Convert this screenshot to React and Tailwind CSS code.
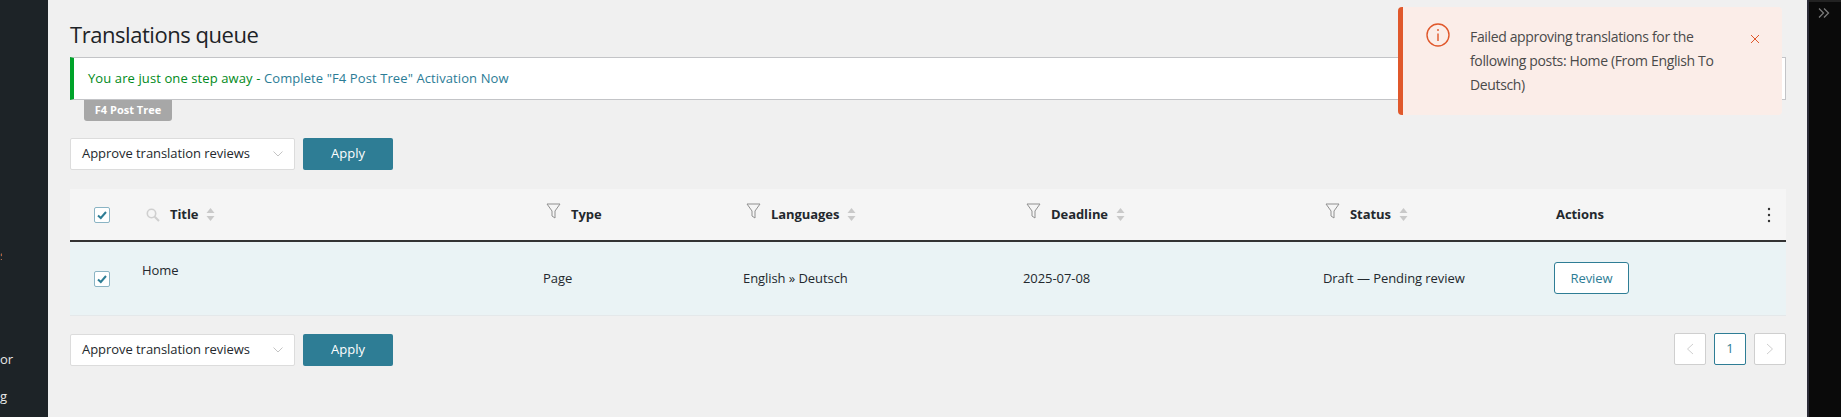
import React from 'react';

const Check = ({ className = '' }) => (
  <span className={`flex h-[16px] w-[16px] items-center justify-center rounded-[2px] border border-[#8ab4c4] bg-white ${className}`}>
    <svg width="12" height="12" viewBox="0 0 12 12" fill="none">
      <path d="M2 6.5 L4.8 9 L10 3" stroke="#2e7d95" strokeWidth="2" />
    </svg>
  </span>
);

const Sort = () => (
  <svg width="9" height="15" viewBox="0 0 9 15" className="ml-[8px] shrink-0">
    <path d="M4.5 1 L8.5 6 L0.5 6 Z" fill="#c9c9c9" />
    <path d="M4.5 14 L8.5 9 L0.5 9 Z" fill="#c9c9c9" />
  </svg>
);

const Funnel = () => (
  <svg width="15" height="17" viewBox="0 0 15 17" fill="none" className="mr-[10px] mt-[-6px] shrink-0">
    <path d="M1 1 H14 L9 8 V15 L6 13 V8 Z" stroke="#8f8f8f" strokeWidth="1" />
  </svg>
);

const Search = () => (
  <svg width="14" height="14" viewBox="0 0 14 14" fill="none" className="mr-[10px] shrink-0">
    <circle cx="5.5" cy="5.5" r="4.2" stroke="#cfcfcf" strokeWidth="1.6" />
    <path d="M8.7 8.7 L13 13" stroke="#cfcfcf" strokeWidth="2" />
  </svg>
);

const Chevron = () => (
  <svg width="10" height="6" viewBox="0 0 10 6" fill="none" className="shrink-0">
    <path d="M0.5 0.5 L5 5 L9.5 0.5" stroke="#c4c4c4" />
  </svg>
);

const BulkBar = () => (
  <div className="flex items-center gap-[8px]">
    <div className="flex h-[32px] w-[225px] items-center justify-between rounded-[2px] border border-[#dcdcdc] bg-white pl-[11px] pr-[11px] text-[13px] tracking-[-0.05px] text-[#23282d]">
      <span>Approve translation reviews</span>
      <Chevron />
    </div>
    <button className="h-[32px] w-[90px] rounded-[2px] bg-[#2e7d95] text-[13px] text-white">Apply</button>
  </div>
);

const PageBtn = ({ children, active }) => (
  <span className={active
    ? 'flex h-[32px] w-[32px] items-center justify-center rounded-[2px] border border-[#2e7d95] bg-white text-[13px] text-[#2e7d95]'
    : 'flex h-[32px] w-[32px] items-center justify-center rounded-[2px] border border-[#cfcfcf] bg-white'}>
    {children}
  </span>
);

const SideLabel = ({ text, className }) => (
  <div className={`overflow-hidden whitespace-nowrap text-[13px] ${className}`}>{text}</div>
);

export default function App() {
  return (
    <div className="relative flex h-[417px] w-[1841px] overflow-hidden bg-[#f0f0f0] font-['Open_Sans',sans-serif] text-[#23282d]">
      <aside className="w-[48px] shrink-0 bg-[#1d2327] text-[#e8e8e8]">
        <SideLabel text="s" className="mt-[246px] w-[2px] text-[#d9704a]" />
        <SideLabel text="or" className="mt-[84px] w-[14px]" />
        <SideLabel text="g" className="mt-[18px] w-[10px]" />
      </aside>

      <main className="flex-1 pl-[22px] pr-[21px]">
        <h1 className="mt-[18px] h-[33px] text-[22px] leading-[33px] tracking-[-0.45px] text-[#1d2327]">Translations queue</h1>
        <div className="mt-[6px] flex h-[43px] items-center border border-l-[4px] border-[#c3c4c7] border-l-[#00a32a] bg-white pl-[14px] text-[13px] font-medium tracking-[0.1px]">
          <span className="text-[#008a20]">You are just one step away -&nbsp;</span>
          <span className="text-[#2b7c96]">Complete "F4 Post Tree" Activation Now</span>
        </div>
        <div className="ml-[14px] flex h-[21px] w-[88px] items-center justify-center rounded-b-[3px] bg-[#a7a7a7] text-[11px] font-bold text-white">F4 Post Tree</div>

        <div className="mt-[17px]"><BulkBar /></div>

        <table className="mt-[19px] w-full table-fixed border-collapse text-[13px] tracking-[-0.07px]">
          <thead>
            <tr className="h-[52px] border-b-2 border-[#333333] bg-[#f5f5f5] text-left font-bold text-[#23282d]">
              <th className="w-[72px] pl-[24px]"><Check /></th>
              <th className="w-[401px] pl-[4px]"><div className="flex items-center"><Search />Title<Sort /></div></th>
              <th className="w-[200px] pl-[3px]"><div className="flex items-center"><Funnel />Type</div></th>
              <th className="w-[280px] pl-[3px]"><div className="flex items-center"><Funnel />Languages<Sort /></div></th>
              <th className="w-[300px] pl-[3px]"><div className="flex items-center"><Funnel />Deadline<Sort /></div></th>
              <th className="w-[231px] pl-[2px]"><div className="flex items-center"><Funnel />Status<Sort /></div></th>
              <th className="pl-[2px]">
                <div className="flex items-center justify-between pr-[15px]">
                  Actions
                  <svg width="4" height="16" viewBox="0 0 4 16"><circle cx="2" cy="2" r="1.2" fill="#333" /><circle cx="2" cy="8" r="1.2" fill="#333" /><circle cx="2" cy="14" r="1.2" fill="#333" /></svg>
                </div>
              </th>
            </tr>
          </thead>
          <tbody>
            <tr className="h-[74px] border-b border-[#e4e8ea] bg-[#eaf3f5]">
              <td className="pl-[24px]"><Check className="mt-[2px]" /></td>
              <td className="pb-[16px]">Home</td>
              <td>Page</td>
              <td>English » Deutsch</td>
              <td>2025-07-08</td>
              <td>Draft — Pending review</td>
              <td>
                <span className="flex h-[32px] w-[75px] items-center justify-center rounded-[3px] border border-[#2e7d95] bg-white text-[#2e7d95]">Review</span>
              </td>
            </tr>
          </tbody>
        </table>

        <div className="mt-[18px] flex items-start justify-between">
          <BulkBar />
          <div className="mt-[-1px] flex gap-[8px]">
            <PageBtn>
              <svg width="8" height="12" viewBox="0 0 8 12" fill="none"><path d="M7 1 L1.5 6 L7 11" stroke="#cfcfcf" /></svg>
            </PageBtn>
            <PageBtn active>1</PageBtn>
            <PageBtn>
              <svg width="8" height="12" viewBox="0 0 8 12" fill="none"><path d="M1 1 L6.5 6 L1 11" stroke="#cfcfcf" /></svg>
            </PageBtn>
          </div>
        </div>
      </main>

      <aside className="w-[34px] shrink-0 border-l-2 border-[#2c2c38] bg-[#0a0a0a]">
        <div className="h-[2px] bg-[#222222]" />
        <svg width="12" height="10" viewBox="0 0 12 10" fill="none" className="ml-[9px] mt-[6px]">
          <path d="M1 0.5 L5.5 5 L1 9.5 M6 0.5 L10.5 5 L6 9.5" stroke="#7a7a7a" strokeWidth="1.3" />
        </svg>
      </aside>

      <div className="absolute left-[1398px] top-[7px] flex h-[108px] w-[384px] rounded-[4px] border-l-[5px] border-[#e0582b] bg-[#fbede8] text-[14px] tracking-[-0.35px] text-[#4a4a4a]">
        <svg width="24" height="24" viewBox="0 0 24 24" fill="none" className="ml-[23px] mt-[16px] shrink-0">
          <circle cx="12" cy="12" r="11" stroke="#e0582b" strokeWidth="1.4" />
          <path d="M12 10.5 V18 M12 6 V8" stroke="#e0582b" strokeWidth="1.4" />
        </svg>
        <p className="ml-[20px] mt-[18px] w-[250px] leading-[24px]">Failed approving translations for the following posts: Home (From English To Deutsch)</p>
        <svg width="10" height="10" viewBox="0 0 10 10" fill="none" className="ml-[30px] mt-[27px] shrink-0">
          <path d="M1 1 L9 9 M9 1 L1 9" stroke="#e0582b" strokeWidth="1" />
        </svg>
      </div>
    </div>
  );
}
